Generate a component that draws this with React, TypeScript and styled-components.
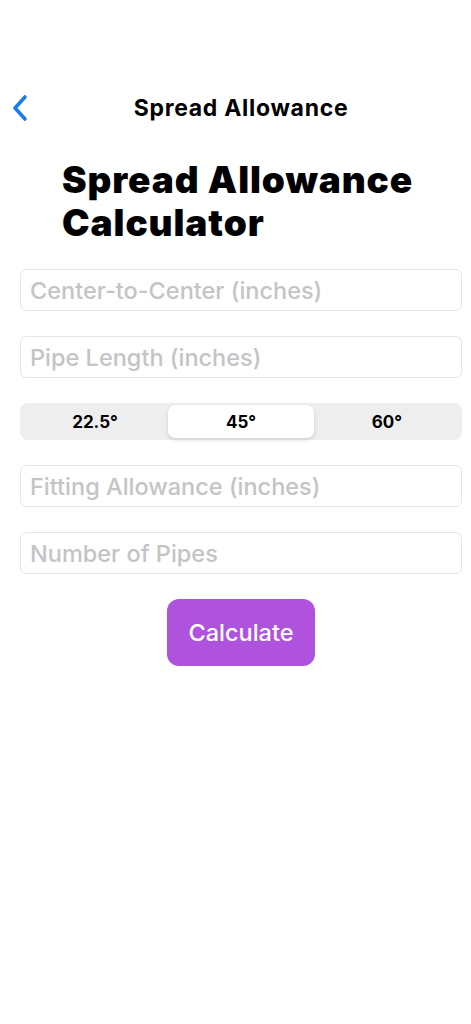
import React, { useState } from "react";
import styled, { createGlobalStyle } from "styled-components";

const GlobalStyle = createGlobalStyle`
  html, body {
    margin: 0;
    padding: 0;
    background: #ffffff;
  }
  body {
    font-family: Inter, "Liberation Sans", sans-serif;
    -webkit-font-smoothing: antialiased;
  }
`;

const Page = styled.div`
  width: 471px;
  min-height: 1024px;
  padding-top: 86px;
  box-sizing: border-box;
  background: #fff;
`;

const NavBar = styled.div`
  position: relative;
  height: 44px;
  display: flex;
  align-items: center;
  justify-content: center;
  padding-left: 11px;
`;

const BackButton = styled.button`
  position: absolute;
  left: 8px;
  top: 50%;
  transform: translateY(-50%);
  background: none;
  border: none;
  padding: 4px;
  display: flex;
  align-items: center;
  cursor: pointer;
`;

const NavTitle = styled.div`
  font-size: 23px;
  font-weight: 700;
  color: #000;
  letter-spacing: 0.7px;
`;

const Title = styled.h1`
  margin: 28px 0 0;
  padding-left: 62px;
  font-size: 37px;
  line-height: 43px;
  font-weight: 900;
  color: #000;
  letter-spacing: 0.9px;
`;

const Form = styled.div`
  display: flex;
  flex-direction: column;
  gap: 25px;
  padding: 25px 9px 0 20px;
`;

const Field = styled.input`
  height: 42px;
  box-sizing: border-box;
  border: 1px solid #e6e6e6;
  border-radius: 6px;
  padding: 0 9px;
  font-family: Inter, "Liberation Sans", sans-serif;
  font-size: 23.5px;
  font-weight: 500;
  color: #000;
  outline: none;
  background: #fff;

  &::placeholder {
    color: #c4c4c6;
  }
`;

const Segmented = styled.div`
  height: 37px;
  box-sizing: border-box;
  background: #eeeeef;
  border-radius: 8px;
  padding: 2px;
  display: grid;
  grid-template-columns: repeat(3, 1fr);
`;

const Segment = styled.button<{ $active: boolean }>`
  border: none;
  border-radius: 7px;
  background: ${(p) => (p.$active ? "#ffffff" : "transparent")};
  box-shadow: ${(p) =>
    p.$active ? "0 2px 4px rgba(0,0,0,0.12), 0 0 1px rgba(0,0,0,0.08)" : "none"};
  font-family: Inter, "Liberation Sans", sans-serif;
  font-size: 17px;
  font-weight: 700;
  color: #000;
  cursor: pointer;
`;

const ButtonRow = styled.div`
  display: flex;
  justify-content: center;
`;

const CalcButton = styled.button`
  width: 148px;
  height: 67px;
  border: none;
  border-radius: 12px;
  background: #af52de;
  color: #fff;
  font-family: Inter, "Liberation Sans", sans-serif;
  font-size: 23.5px;
  font-weight: 500;
  cursor: pointer;
`;

const angles = ["22.5°", "45°", "60°"];

export default function App() {
  const [angle, setAngle] = useState("45°");

  return (
    <Page>
      <GlobalStyle />
      <NavBar>
        <BackButton aria-label="Back">
          <svg width="16" height="28" viewBox="0 0 16 28">
            <path
              d="M13 3 L3 14 L13 25"
              fill="none"
              stroke="#1a7cf5"
              strokeWidth="3.6"
              strokeLinecap="round"
              strokeLinejoin="round"
            />
          </svg>
        </BackButton>
        <NavTitle>Spread Allowance</NavTitle>
      </NavBar>
      <Title>
        Spread Allowance
        <br />
        Calculator
      </Title>
      <Form>
        <Field placeholder="Center-to-Center (inches)" />
        <Field placeholder="Pipe Length (inches)" />
        <Segmented>
          {angles.map((a) => (
            <Segment key={a} $active={a === angle} onClick={() => setAngle(a)}>
              {a}
            </Segment>
          ))}
        </Segmented>
        <Field placeholder="Fitting Allowance (inches)" />
        <Field placeholder="Number of Pipes" />
        <ButtonRow>
          <CalcButton>Calculate</CalcButton>
        </ButtonRow>
      </Form>
    </Page>
  );
}
